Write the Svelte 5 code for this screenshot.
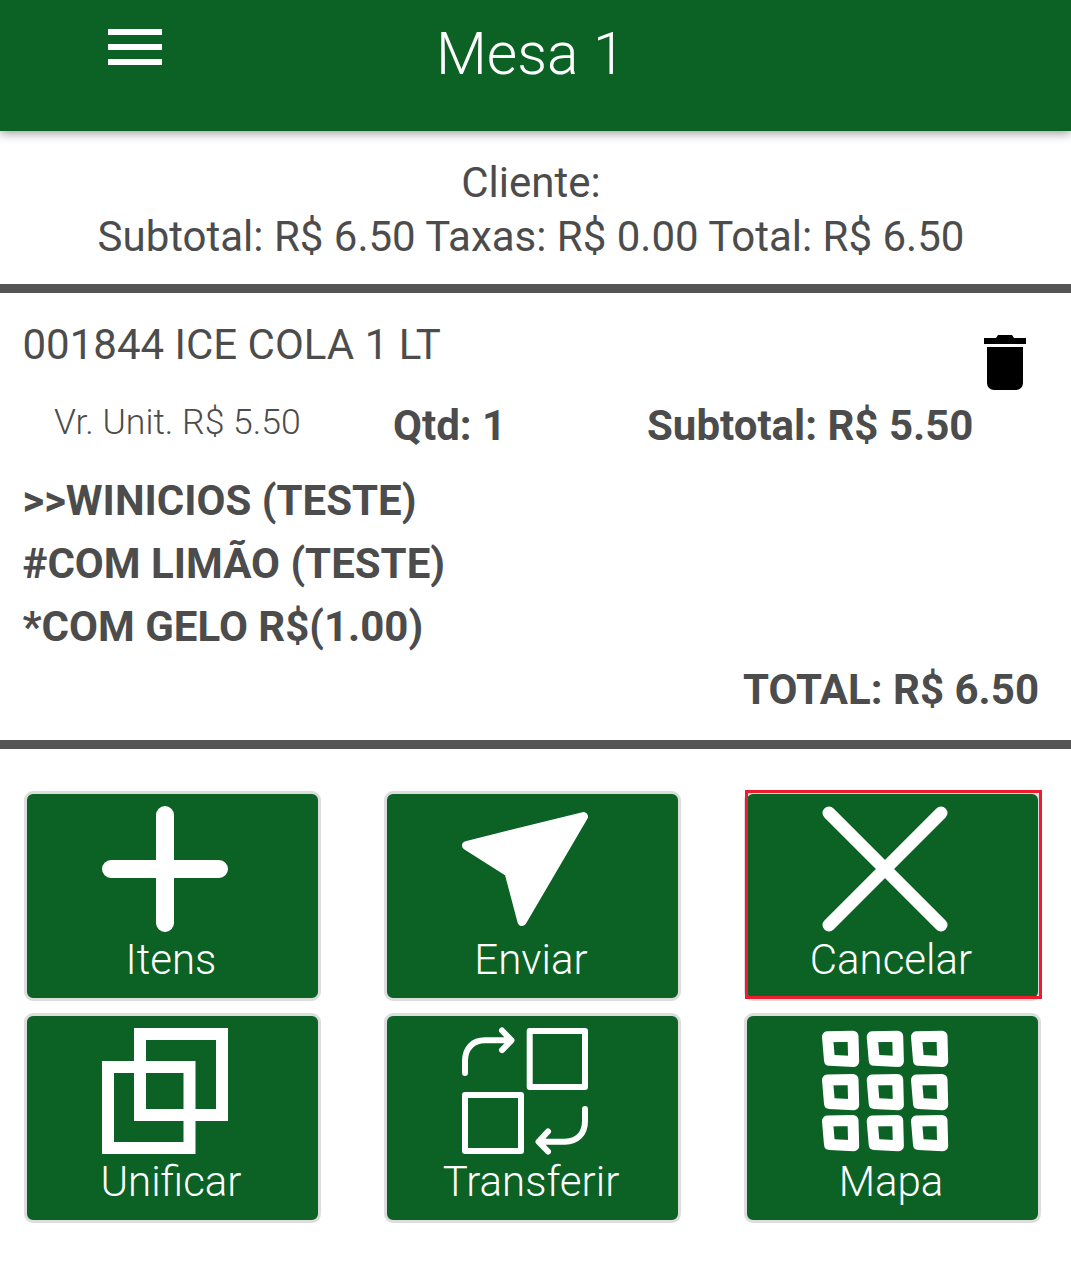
<script>
  const cells = [];
  const xs = [0, 44.7, 89];
  const ys = [2.7, 46, 87];
  for (const y of ys) for (const x of xs) cells.push({ x, y });
</script>

<div class="page">
  <header class="top">
    <div class="menu" aria-label="Menu"><span></span><span></span><span></span></div>
    <h1>Mesa 1</h1>
  </header>

  <section class="summary">
    <p>Cliente:</p>
    <p>Subtotal: R$ 6.50 Taxas: R$ 0.00 Total: R$ 6.50</p>
  </section>

  <section class="item">
    <div class="item-head">
      <div class="name">001844 ICE COLA 1 LT</div>
      <svg class="trash" viewBox="0 0 42 55" aria-hidden="true">
        <path d="M0 3h12l2-3h14l2 3h12v6H0z" />
        <path d="M3 12h36v36a7 7 0 0 1-7 7H10a7 7 0 0 1-7-7z" />
      </svg>
    </div>
    <div class="item-values">
      <span class="unit">Vr. Unit. R$ 5.50</span>
      <strong class="qty">Qtd: 1</strong>
      <strong class="sub">Subtotal: R$ 5.50</strong>
    </div>
    <div class="extras">
      <strong>&gt;&gt;WINICIOS (TESTE)</strong>
      <strong>#COM LIMÃO (TESTE)</strong>
      <strong>*COM GELO R$(1.00)</strong>
    </div>
    <strong class="total">TOTAL: R$ 6.50</strong>
  </section>

  <section class="actions">
    <button type="button">
      <svg viewBox="0 0 126 126" aria-hidden="true">
        <path class="line" stroke-width="18" d="M63 9v108M9 63h108" />
      </svg>
      <span>Itens</span>
    </button>
    <button type="button">
      <svg viewBox="0 0 126 126" aria-hidden="true">
        <path class="solid" d="M4.500 39.500 121.500 10.500 60 115.500 47 66.500Z" />
      </svg>
      <span>Enviar</span>
    </button>
    <button type="button" class="focused">
      <svg viewBox="0 0 126 126" aria-hidden="true">
        <path class="line" stroke-width="13" d="M7 7l112 112M119 7 7 119" />
      </svg>
      <span>Cancelar</span>
    </button>
    <button type="button">
      <svg viewBox="0 0 126 126" aria-hidden="true">
        <path class="miter" stroke-width="12" d="M38 6h82v81H38zM6 39h81.500v81H6z" />
      </svg>
      <span>Unificar</span>
    </button>
    <button type="button">
      <svg viewBox="0 0 126 126" aria-hidden="true">
        <path class="join" stroke-width="6" d="M67.700 3h55.300v56H67.700zM3 67h56v56H3z" />
        <path class="line" stroke-width="6" d="M3 45V33C3 20 11 12.300 23 12.300h26M40 2.500l9.500 9.800-9.500 9.800" />
        <path class="line" stroke-width="6" d="M123 81v12c0 13-8 20.700-20 20.700H77M86 103.500l-9.500 10.200 9.500 9.800" />
      </svg>
      <span>Transferir</span>
    </button>
    <button type="button">
      <svg viewBox="0 0 126 126" aria-hidden="true">
        {#each cells as c}
          <path class="join" stroke-width="11" transform="translate({c.x} {c.y})" d="M5.500 6 31 5.500 31.700 30.800 7.500 29.600Z" />
        {/each}
      </svg>
      <span>Mapa</span>
    </button>
  </section>
</div>

<style>
  :global(body) {
    background: #fff;
  }

  .page {
    width: 1071px;
    height: 1261px;
    overflow: hidden;
    font-family: Roboto, "Liberation Sans", sans-serif;
    color: #4c4c4c;
    background: #fff;
  }

  .top {
    position: relative;
    z-index: 1;
    display: flex;
    align-items: flex-start;
    gap: 274px;
    box-sizing: border-box;
    height: 131px;
    padding-left: 108px;
    background: #0b6224;
    box-shadow: 0 2px 10px rgba(0, 0, 0, 0.42);
  }

  .menu {
    display: flex;
    flex-direction: column;
    gap: 9px;
    width: 54px;
    padding-top: 29px;
  }

  .menu span {
    height: 6px;
    background: #fff;
  }

  h1 {
    margin: 0;
    padding-top: 19px;
    font-size: 58.8px;
    line-height: 70px;
    font-weight: 300;
    color: #fff;
  }

  .summary {
    box-sizing: border-box;
    height: 162px;
    padding: 25px 9px 0 0;
    border-bottom: 9px solid #555;
    text-align: center;
    font-size: 42px;
    line-height: 54px;
  }

  .summary p {
    margin: 0;
  }

  .item {
    display: flex;
    flex-direction: column;
    box-sizing: border-box;
    height: 456px;
    padding: 25px 32px 0 22.5px;
    border-bottom: 9px solid #555;
    font-size: 42px;
    line-height: 54px;
  }

  .item-head {
    display: flex;
    justify-content: space-between;
    align-items: flex-start;
    height: 54px;
  }

  .trash {
    display: block;
    width: 42px;
    height: 55px;
    margin: 17px 13px 0 0;
    fill: #000;
  }

  .item-values {
    display: flex;
    align-items: flex-start;
    margin-top: 27px;
    height: 54px;
  }

  .unit {
    width: 339.5px;
    padding-left: 31.5px;
    box-sizing: border-box;
    font-size: 35.6px;
    line-height: 46px;
    font-weight: 300;
  }

  .qty {
    width: 254px;
    margin-left: 31px;
  }

  .extras {
    display: flex;
    flex-direction: column;
    margin-top: 16px;
    line-height: 63px;
  }

  .total {
    align-self: flex-end;
    line-height: 63px;
  }

  .actions {
    display: grid;
    grid-template-columns: repeat(3, 297px);
    grid-auto-rows: 210px;
    gap: 12px 63px;
    padding: 42px 0 0 24px;
  }

  button {
    position: relative;
    display: flex;
    flex-direction: column;
    align-items: flex-start;
    box-sizing: border-box;
    padding: 12px 0 0;
    border: 3px solid #ddd;
    border-radius: 9px;
    background: #0b6224;
    color: #fff;
    font-family: inherit;
  }

  button svg {
    display: block;
    width: 126px;
    height: 126px;
    margin-left: 75px;
    overflow: visible;
  }

  button span {
    align-self: stretch;
    padding: 1px 3px 0 0;
    text-align: center;
    font-size: 42px;
    line-height: 54px;
    font-weight: 300;
  }

  .focused::after {
    content: "";
    position: absolute;
    top: -4px;
    left: -2px;
    box-sizing: border-box;
    width: 297px;
    height: 209px;
    border: 3px solid #ee1c2e;
  }

  .line {
    fill: none;
    stroke: #fff;
    stroke-linecap: round;
    stroke-linejoin: round;
  }

  .join {
    fill: none;
    stroke: #fff;
    stroke-linejoin: round;
  }

  .miter {
    fill: none;
    stroke: #fff;
  }

  .solid {
    fill: #fff;
    stroke: #fff;
    stroke-width: 9;
    stroke-linejoin: round;
  }
</style>
